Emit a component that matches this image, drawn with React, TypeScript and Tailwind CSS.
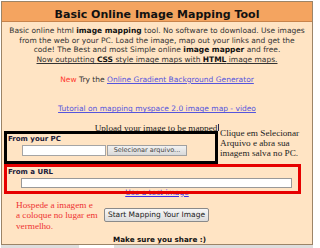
export default function App() {
  return (
    <div className="w-[320px] h-[248px] overflow-hidden bg-white font-['DejaVu_Sans',sans-serif]">
      <div className="ml-px mt-px w-[312px] h-[244px] border border-[#9c8467] bg-[#ffe4c4] text-[#333]">
        <div className="h-[20px] bg-[#f4a460] border-b border-[#c8834a] pt-[6px] text-center text-[11px] leading-[13px] font-bold text-[#111]">
          Basic Online Image Mapping Tool
        </div>

        <div className="pt-[4px] text-center text-[7.5px] leading-[9.7px] whitespace-nowrap">
          Basic online html <b className="text-[#111]">image mapping</b> tool. No software to download. Use images
          <br />
          from the web or your PC. Load the image, map out your links and get the
          <br />
          code! The Best and most Simple online <b className="text-[#111]">image mapper</b> and free.
          <br />
          <span className="underline">
            Now outputting <b className="text-[#111]">CSS</b> style image maps with <b className="text-[#111]">HTML</b> image maps.
          </span>
        </div>

        <div className="mt-[10.2px] text-center text-[7.5px] leading-[9.7px] whitespace-nowrap">
          <span className="text-[#ff3b30]">New</span> Try the{' '}
          <a className="text-[#5555dd] underline">Online Gradient Background Generator</a>
        </div>

        <div className="mt-[19.7px] text-center text-[7.5px] leading-[9.7px] whitespace-nowrap">
          <a className="text-[#5555dd] underline">Tutorial on mapping myspace 2.0 image map - video</a>
        </div>

        <div className="mt-[9px] text-center font-['Liberation_Serif',serif] text-[9.2px] leading-[10px] text-[#222] whitespace-nowrap">
          Upload your image to be mapped
          <span className="inline-block ml-px w-px h-[7px] bg-[#2a2a4a] align-baseline" />
        </div>

        <div className="mt-[-2px] flex items-start">
          <div className="relative ml-[2px] w-[214px] h-[33px] border-[3px] border-black">
            <div className="pl-px pt-px text-[7px] leading-[9px] font-bold text-[#1a1a3a]">From your PC</div>
            <div className="mt-px ml-[15px] flex">
              <div className="w-[84px] h-[11px] bg-white border border-[#a5a5a5]" />
              <div className="ml-px w-[80px] h-[11px] border border-[#a0a0a0] bg-gradient-to-b from-[#f2f2f2] to-[#d9d9d9] text-center text-[6.5px] leading-[9px] text-[#444]">
                Selecionar arquivo...
              </div>
            </div>
          </div>
          <div className="ml-[2px] mt-[-3px] font-['Liberation_Serif',serif] text-[9.2px] leading-[10px] text-[#222] whitespace-nowrap">
            Clique em Selecionar
            <br />
            Arquivo e abra sua
            <br />
            imagem salva no PC.
          </div>
        </div>

        <div className="relative ml-[2px] w-[297px] h-[30px] border-[3px] border-[#e60000]">
          <div className="pl-px pt-[1.4px] text-[7px] leading-[9px] font-bold text-[#1a1a3a]">From a URL</div>
          <div className="mt-[0.3px] ml-[14px] w-[271px] h-[10px] bg-white border border-[#999]" />
        </div>

        <div className="mt-[-6.5px] text-center text-[7.5px] leading-[9.7px] whitespace-nowrap">
          <a className="text-[#3a2ee8] underline">Use a test image</a>
        </div>

        <div className="mt-[2.5px] flex items-start">
          <div className="pl-[14px] w-[102px] font-['Liberation_Serif',serif] text-[9.2px] leading-[10.5px] text-[#ee3333] whitespace-nowrap">
            Hospede a imagem e
            <br />
            a coloque no lugar em
            <br />
            vermelho.
          </div>
          <button className="mt-[8.3px] w-[105px] h-[14px] border border-[#8a8a8a] rounded-[2px] bg-gradient-to-b from-[#f7f7f7] to-[#dcdcdc] text-[7.5px] leading-[12px] text-[#222] whitespace-nowrap">
            Start Mapping Your Image
          </button>
        </div>

        <div className="mt-[4px] pl-[5px] text-center text-[7.2px] leading-[9px] font-bold text-[#111]">
          Make sure you share :)
        </div>
      </div>
      <div className="ml-px w-[312px] h-[3px] bg-[#dedede]">
        <div className="ml-[78px] w-[35px] h-[3px] bg-white" />
      </div>
    </div>
  );
}
